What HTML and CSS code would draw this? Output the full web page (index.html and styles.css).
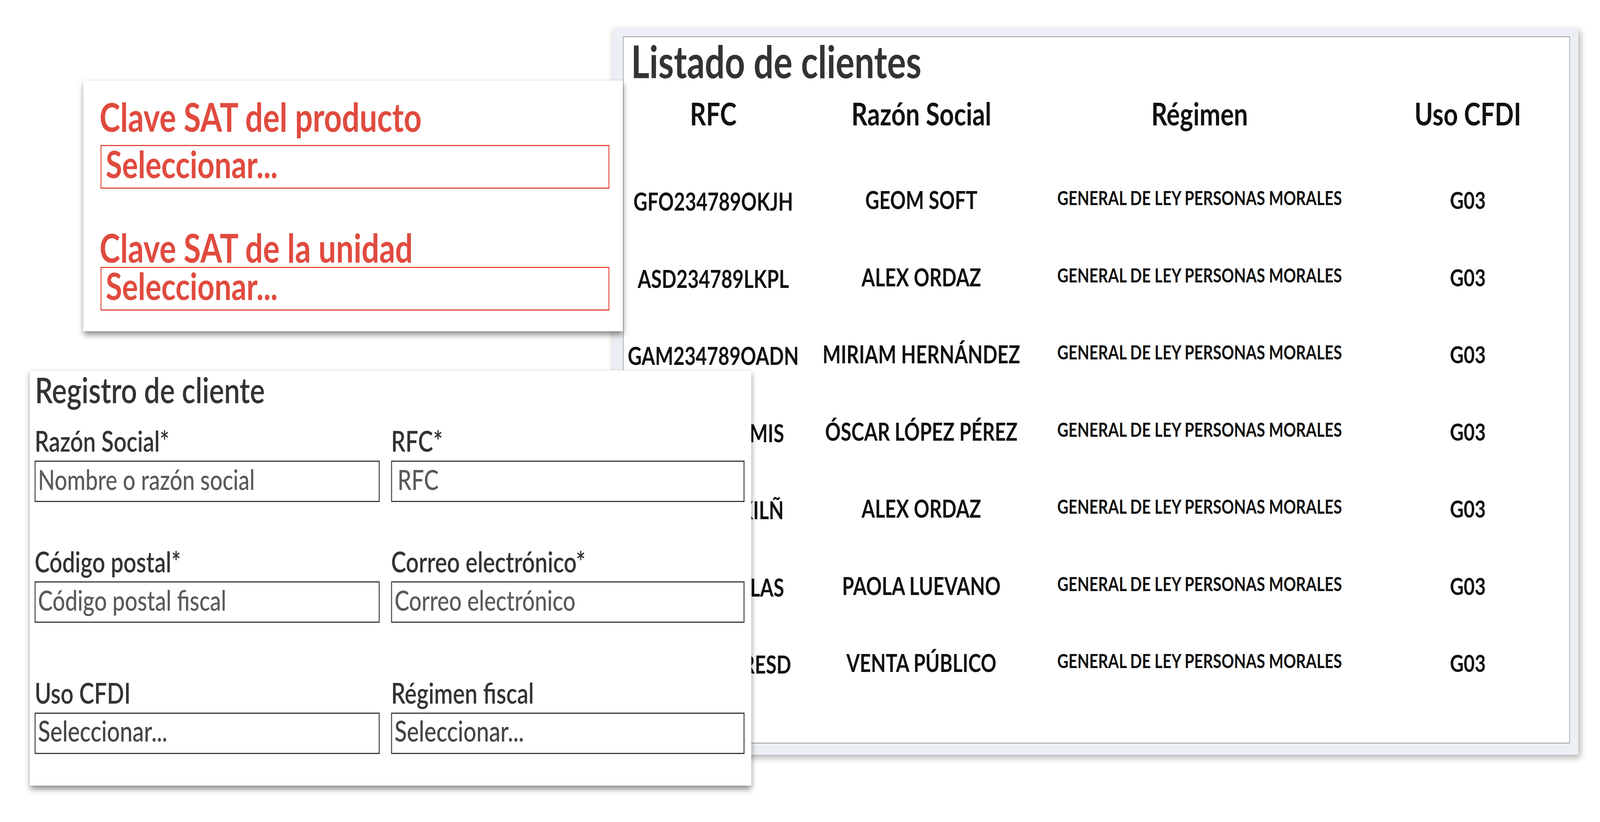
FILE: index.html
```html
<!DOCTYPE html>
<html lang="es">
<head>
<meta charset="utf-8">
<title>Clientes</title>
<link rel="stylesheet" href="styles.css">
</head>
<body>
<div class="screen">
<div class="desk">
  <section class="win list-win">
    <div class="list-inner">
      <h1 class="list-title">Listado de clientes</h1>
      <div class="table">
        <div class="th">RFC</div>
        <div class="th">Razón Social</div>
        <div class="th">Régimen</div>
        <div class="th th-uso">Uso CFDI</div>

        <div class="c-rfc">GFO234789OKJH</div>
        <div class="c-name">GEOM SOFT</div>
        <div class="c-reg">GENERAL DE LEY PERSONAS MORALES</div>
        <div class="c-uso">G03</div>

        <div class="c-rfc">ASD234789LKPL</div>
        <div class="c-name">ALEX ORDAZ</div>
        <div class="c-reg">GENERAL DE LEY PERSONAS MORALES</div>
        <div class="c-uso">G03</div>

        <div class="c-rfc">GAM234789OADN</div>
        <div class="c-name">MIRIAM HERNÁNDEZ</div>
        <div class="c-reg">GENERAL DE LEY PERSONAS MORALES</div>
        <div class="c-uso">G03</div>

        <div class="c-rfc">OLP23478AMIS</div>
        <div class="c-name">ÓSCAR LÓPEZ PÉREZ</div>
        <div class="c-reg">GENERAL DE LEY PERSONAS MORALES</div>
        <div class="c-uso">G03</div>

        <div class="c-rfc">AOR23478KILÑ</div>
        <div class="c-name">ALEX ORDAZ</div>
        <div class="c-reg">GENERAL DE LEY PERSONAS MORALES</div>
        <div class="c-uso">G03</div>

        <div class="c-rfc">LUP23478OLAS</div>
        <div class="c-name">PAOLA LUEVANO</div>
        <div class="c-reg">GENERAL DE LEY PERSONAS MORALES</div>
        <div class="c-uso">G03</div>

        <div class="c-rfc">VPU234789RESD</div>
        <div class="c-name">VENTA PÚBLICO</div>
        <div class="c-reg">GENERAL DE LEY PERSONAS MORALES</div>
        <div class="c-uso">G03</div>
      </div>
    </div>
  </section>

  <section class="win clave-win">
    <div class="clave-field">
      <h2 class="clave-title">Clave SAT del producto</h2>
      <div class="clave-select">Seleccionar...</div>
    </div>
    <div class="clave-field tight">
      <h2 class="clave-title">Clave SAT de la unidad</h2>
      <div class="clave-select">Seleccionar...</div>
    </div>
  </section>

  <section class="win reg-win">
    <h2 class="reg-title">Registro de cliente</h2>
    <div class="reg-form">
      <div class="field">
        <label class="field-label">Razón Social*</label>
        <div class="field-input placeholder">Nombre o razón social</div>
      </div>
      <div class="field">
        <label class="field-label">RFC*</label>
        <div class="field-input placeholder rfc">RFC</div>
      </div>
      <div class="field">
        <label class="field-label">Código postal*</label>
        <div class="field-input placeholder">Código postal fiscal</div>
      </div>
      <div class="field">
        <label class="field-label">Correo electrónico*</label>
        <div class="field-input placeholder">Correo electrónico</div>
      </div>
      <div class="field">
        <label class="field-label">Uso CFDI</label>
        <div class="field-input select">Seleccionar...</div>
      </div>
      <div class="field">
        <label class="field-label">Régimen fiscal</label>
        <div class="field-input select">Seleccionar...</div>
      </div>
    </div>
  </section>
</div>
</div>
</body>
</html>
```

FILE: styles.css
```css
html, body {
  margin: 0;
  padding: 0;
  background: #fff;
  overflow: hidden;
}
body {
  font-family: Lato, "Open Sans", sans-serif;
}
.screen {
  width: 100%;
  height: 2104px;
  overflow: hidden;
}
.desk {
  position: relative;
  width: 5175px;
  height: 2104px;
  transform-origin: 0 0;
}
@media (max-width: 5174px) {
  .desk {
    transform: scaleX(0.791498);
  }
}
.win {
  position: absolute;
  box-sizing: border-box;
  background: #fff;
}

/* ---------- Listado de clientes ---------- */
.list-win {
  left: 1983px;
  top: 71px;
  width: 3122px;
  height: 1861px;
  padding: 22px 27px 29px 32px;
  background: #eceff4;
  box-shadow: 5px 7px 18px rgba(0, 0, 0, 0.32);
  z-index: 1;
}
.list-inner {
  height: 100%;
  box-sizing: border-box;
  background: #fff;
  border: 2px solid #9d9d9d;
  padding-top: 4px;
}
.list-title {
  margin: 0 0 36px 24px;
  font-size: 114px;
  line-height: 114px;
  font-weight: 700;
  color: #333;
}
.table {
  display: grid;
  grid-template-columns: 580px 766px 1034px 1fr;
  grid-template-rows: 190px repeat(7, 197.5px);
  color: #111;
  font-weight: 700;
  text-align: center;
  white-space: nowrap;
}
.th {
  font-size: 81px;
  line-height: 81px;
}
.th-uso {
  padding-left: 22px;
}
.c-rfc {
  font-size: 62.5px;
  line-height: 63px;
  padding-top: 44px;
}
.c-name {
  font-size: 62.5px;
  line-height: 63px;
  padding-top: 40px;
}
.c-reg {
  font-size: 50px;
  line-height: 50.5px;
  padding-top: 42px;
}
.c-uso {
  font-size: 61.5px;
  line-height: 62px;
  padding-top: 41px;
  padding-left: 22px;
}

/* ---------- Clave SAT ---------- */
.clave-win {
  left: 269px;
  top: 206px;
  width: 1746px;
  height: 642px;
  padding: 41.5px 44px 0 56px;
  box-shadow: 1px 9px 16px rgba(0, 0, 0, 0.45), 0 0 3px rgba(0, 0, 0, 0.15);
  z-index: 2;
}
.clave-title {
  margin: 0 0 23.5px -3px;
  font-size: 101px;
  line-height: 100px;
  font-weight: 700;
  color: #e04b3f;
  white-space: nowrap;
}
.clave-field.tight {
  margin-top: 99.5px;
}
.clave-field.tight .clave-title {
  margin-bottom: 0;
}
.clave-select {
  height: 112px;
  box-sizing: border-box;
  border: 3px solid #e04b3f;
  padding: 0 0 0 14px;
  font-size: 96.5px;
  line-height: 90px;
  font-weight: 700;
  color: #e04b3f;
}

/* ---------- Registro de cliente ---------- */
.reg-win {
  left: 96px;
  top: 948px;
  width: 2334px;
  height: 1063px;
  padding: 4px 22px 0 16px;
  box-shadow: 1px 9px 16px rgba(0, 0, 0, 0.45), 0 0 3px rgba(0, 0, 0, 0.15);
  z-index: 3;
}
.reg-title {
  margin: 0 0 51px 1px;
  font-size: 91px;
  line-height: 90px;
  font-weight: 600;
  color: #333;
}
.reg-form {
  display: grid;
  grid-template-columns: 1116px 1143px;
  grid-template-rows: 309px 336px auto;
  column-gap: 37px;
  align-items: start;
}
.field {
  display: flex;
  flex-direction: column;
}
.field-label {
  height: 70px;
  margin-bottom: 16px;
  font-size: 73px;
  line-height: 70px;
  font-weight: 600;
  color: #333;
  white-space: nowrap;
}
.field-input {
  height: 106px;
  box-sizing: border-box;
  border: 3px solid #3a3a3a;
  padding: 9px 0 0 8px;
  font-size: 71.5px;
  line-height: 70px;
  font-weight: 500;
  white-space: nowrap;
}
.field-input.placeholder {
  color: #5a5a5a;
}
.field-input.rfc {
  padding-left: 18px;
}
.field-input.select {
  padding-top: 8px;
  font-size: 73.5px;
  color: #444;
}
```
